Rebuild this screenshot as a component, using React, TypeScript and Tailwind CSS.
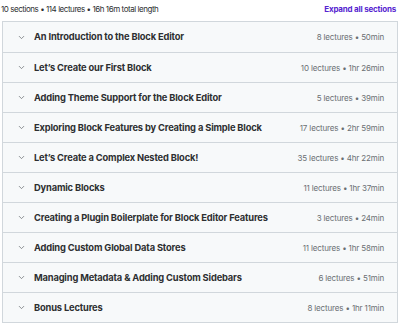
import { ChevronDown } from 'lucide-react';

const sections = [
  { title: 'An Introduction to the Block Editor', meta: '8 lectures • 50min' },
  { title: 'Let’s Create our First Block', meta: '10 lectures • 1hr 26min' },
  { title: 'Adding Theme Support for the Block Editor', meta: '5 lectures • 39min' },
  { title: 'Exploring Block Features by Creating a Simple Block', meta: '17 lectures • 2hr 59min' },
  { title: 'Let’s Create a Complex Nested Block!', meta: '35 lectures • 4hr 22min' },
  { title: 'Dynamic Blocks', meta: '11 lectures • 1hr 37min' },
  { title: 'Creating a Plugin Boilerplate for Block Editor Features', meta: '3 lectures • 24min' },
  { title: 'Adding Custom Global Data Stores', meta: '11 lectures • 1hr 58min' },
  { title: 'Managing Metadata & Adding Custom Sidebars', meta: '6 lectures • 51min' },
  { title: 'Bonus Lectures', meta: '8 lectures • 1hr 11min' },
];

export default function App() {
  return (
    <div className="w-[400px] h-[323px] overflow-hidden bg-white pl-[2px] pr-[2px] font-['Inter',sans-serif]">
      {/* Summary header */}
      <div className="flex items-center justify-between h-[21px] pb-[4px] -ml-[1px] pr-[2px]">
        <span className="text-[8px] text-[#2d2f31] tracking-[-0.45px]">
          10 sections • 114 lectures • 16h 16m total length
        </span>
        <button className="text-[8px] font-bold text-[#5624d0] tracking-[-0.2px]">
          Expand all sections
        </button>
      </div>

      {/* Sections */}
      <div className="border border-[#d1d7dc]">
        {sections.map((s, i) => (
          <div
            key={i}
            className={`flex items-center h-[30px] bg-[#f7f9fa] pl-[14px] pr-[13px] ${
              i > 0 ? 'border-t border-[#d1d7dc]' : ''
            }`}
          >
            <ChevronDown size={9} strokeWidth={2} className="text-[#6a6f73] shrink-0" />
            <span className="ml-[8px] flex-1 text-[9.3px] font-bold text-[#2d2f31] tracking-[-0.15px] truncate">
              {s.title}
            </span>
            <span className="text-[8px] text-[#6a6f73] tracking-[-0.15px] shrink-0">{s.meta}</span>
          </div>
        ))}
      </div>
    </div>
  );
}
